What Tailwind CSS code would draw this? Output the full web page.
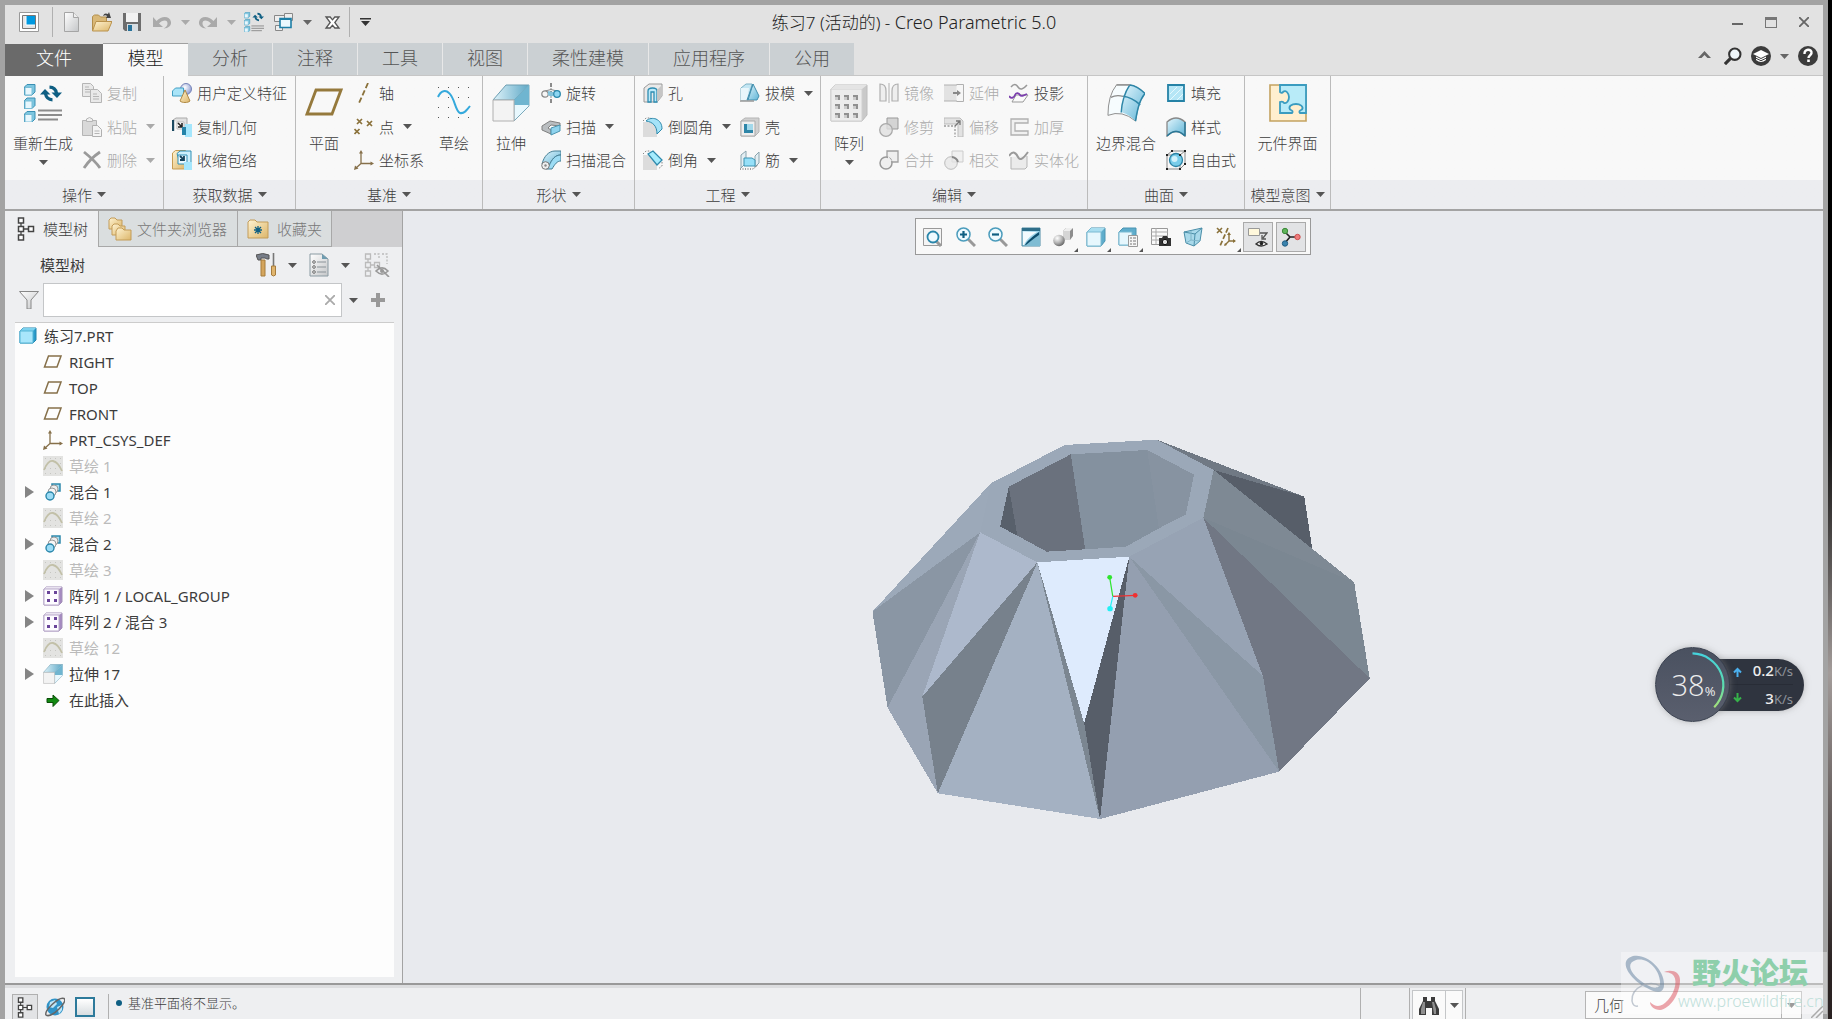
<!DOCTYPE html>
<html lang="zh-CN">
<head>
  <meta charset="UTF-8" />
  <title>练习7 (活动的) - Creo Parametric 5.0</title>
  <meta name="viewport" content="width=device-width, initial-scale=1.0">
  <script src="https://cdn.jsdelivr.net/npm/@tailwindcss/browser@4"></script>
</head>
<body class="h-screen overflow-hidden pr-1 bg-linear-to-b from-black from-35% via-[#a39c9a] via-66% to-[#2a2222] to-95% font-['Noto_Sans','Noto_Sans_CJK_SC',sans-serif] font-light text-[15px] leading-5 text-[#3c3c3c]">

  <!-- icon sprite -->
  <svg class="absolute size-0" xmlns="http://www.w3.org/2000/svg">
    <defs>
      <linearGradient id="gBlue" x1="0" y1="0" x2="1" y2="1"><stop offset="0" stop-color="#e3f6fd"/><stop offset="1" stop-color="#5fb4d6"/></linearGradient>
      <linearGradient id="gTop" x1="0" y1="0" x2="1" y2="0"><stop offset="0" stop-color="#dff3fa"/><stop offset="1" stop-color="#5ea8c6"/></linearGradient>
      <linearGradient id="gGray" x1="0" y1="0" x2="1" y2="1"><stop offset="0" stop-color="#ffffff"/><stop offset="1" stop-color="#c4c6c8"/></linearGradient>
      <linearGradient id="gGold" x1="0" y1="0" x2="1" y2="1"><stop offset="0" stop-color="#fff3d2"/><stop offset="1" stop-color="#dcb66a"/></linearGradient>
      <radialGradient id="gBall" cx=".35" cy=".3" r=".8"><stop offset="0" stop-color="#ffffff"/><stop offset=".5" stop-color="#b5b5b5"/><stop offset="1" stop-color="#555555"/></radialGradient>
      <radialGradient id="gSphere" cx=".4" cy=".35" r=".7"><stop offset="0" stop-color="#ffffff"/><stop offset="1" stop-color="#8796cf"/></radialGradient>
      <linearGradient id="gRing" x1="0" y1="0" x2="0" y2="1"><stop offset="0" stop-color="#45d3dc"/><stop offset=".6" stop-color="#5bdcae"/><stop offset="1" stop-color="#a5e07a"/></linearGradient>
    </defs>
    <symbol id="caret" viewBox="0 0 9 5"><path d="M0 0h9L4.500 5z" fill="currentColor"/></symbol>
    <symbol id="app" viewBox="0 0 20 20"><path d="M.5.5h19v19H.5z" fill="#fff" stroke="#999"/><path d="M3.500 3.500h13v13h-13z" fill="#e6e6e6" stroke="#777"/><path d="M7 4h9v9H7z" fill="#0099e0"/><path d="M7 4v9h9" fill="none" stroke="#fff"/></symbol>
    <symbol id="new" viewBox="0 0 20 20"><path d="M2.500.5h9l5 5v14h-14z" fill="url(#gGray)" stroke="#a5a5a5"/><path d="M11.500.5v5h5" fill="#eee" stroke="#a5a5a5"/></symbol>
    <symbol id="open" viewBox="0 0 20 20"><path d="M.5 18.500v-14l2-1.500h4l2 2h6v5" fill="#d9b877" stroke="#b28e4c"/><path d="M4 9.500h16l-4 9.500H.5z" fill="url(#gGold)" stroke="#b9924d"/><path d="M11 4c1-3 3-3 5-2l1-2 2 6h-5l1-2c-1-1-2-1-4 0z" fill="#444"/></symbol>
    <symbol id="save" viewBox="0 0 20 20"><path d="M1 1h18v18H3l-2-2z" fill="#6d6d6d"/><path d="M4 1h12v9H4z" fill="#f2f2f2"/><path d="M5 12h11v7H5z" fill="#d6dde2"/><path d="M6 13h4v6H6z" fill="#267199"/></symbol>
    <symbol id="undo" viewBox="0 0 20 20"><path d="M1 5v10h10l-4-3.500C10 8 16 7 15.500 12c-.3 2-2 3.500-4 4.500 5 0 8-3 7.500-6.500C18 4 10 3 4.500 9z" fill="#aaa"/></symbol>
    <symbol id="redo" viewBox="0 0 20 20"><path d="M19 5v10H9l4-3.500C10 8 4 7 4.500 12c.3 2 2 3.500 4 4.500-5 0-8-3-7.500-6.500C2 4 10 3 15.500 9z" fill="#aaa"/></symbol>
    <symbol id="regen" viewBox="0 0 38 38"><g stroke="#3a8fb3" stroke-width="1"><path d="M.5 3l2.500-2.500h8V8l-3 3H.5z" fill="#7cc6e0"/><path d="M1 3.500h7V11H1z" fill="#e8f7fd" stroke="#79bdd6"/><path d="M.5 16.500l2.500-2.500h8v7.500l-3 3H.5z" fill="#7cc6e0"/><path d="M1 17h7v7.500H1z" fill="#e8f7fd" stroke="#79bdd6"/><path d="M.5 30l2.500-2.500h8V35l-3 3H.5z" fill="#7cc6e0"/><path d="M1 30.500h7V38H1z" fill="#e8f7fd" stroke="#79bdd6"/></g><path d="M14 26.500h24M14 31h24M14 35.500h20" stroke="#8c8c8c" stroke-width="1.800"/><path d="M25.500 3.200q6 .2 7 6M28.500 15.800q-6-.2-7-6" fill="none" stroke="#0f5f83" stroke-width="3.200"/><path d="M27.500 8.500h10.500L33 14zM26.500 10.500H16L21 5z" fill="#0f5f83"/></symbol>
    <symbol id="wins" viewBox="0 0 20 20"><g fill="#eee" stroke="#888"><path d="M10.500 1.500h8v7h-8zM.5 3.500h10v6H.5zM1.500 13.500h7v5h-7z"/></g><path d="M6 6.500h11v9H6z" fill="#eaf8fe" stroke="#1d7ea6" stroke-width="1.600"/><path d="M6 7.500h11" stroke="#1d7ea6"/></symbol>
    <symbol id="xwin" viewBox="0 0 20 20"><path d="M4 5h4.200l2.300 2.800L12.800 5H17l-4.200 5.500L17 16h-4.200l-2.300-2.800L8.200 16H4l4.200-5.500z" fill="#fff" stroke="#555" stroke-width="1.300"/></symbol>
    <symbol id="bar" viewBox="0 0 11 8"><path d="M0 0h11v1.600H0zM1 3h9L5.500 8z" fill="#333"/></symbol>

    <symbol id="copy" viewBox="0 0 20 20"><g fill="#e9e9e9" stroke="#b5b5b5"><path d="M.5.500h8l3 3v10H.5z"/><path d="M8.500 6.500h7l4 4v9h-11z"/></g><path d="M3 4h4M3 6.500h5M3 9h5M11 11h4M11 13.500h6M11 16h6" stroke="#b5b5b5"/></symbol>
    <symbol id="paste" viewBox="0 0 20 20"><path d="M.5 3.500h14v15H.5z" fill="#d9d9d9" stroke="#b5b5b5"/><path d="M4.500 4.500V2l3-1.500L10.500 2v2.500z" fill="#eee" stroke="#b5b5b5"/><path d="M10.500 8.500h5l4 4v7h-9z" fill="#f4f4f4" stroke="#b0b0b0"/><path d="M12.500 14h5M12.500 16.500h5" stroke="#b5b5b5"/></symbol>
    <symbol id="del" viewBox="0 0 20 20"><path d="M2 2c5 4 12 10 16 16M18 2C12 6 6 12 2 18" stroke="#9a9a9a" stroke-width="2.800" fill="none"/></symbol>
    <symbol id="udf" viewBox="0 0 20 20"><circle cx="14" cy="6" r="5.500" fill="url(#gSphere)" stroke="#7684b8"/><path d="M.5 8l3-3h8v8h-11z" fill="#a9e4f8" stroke="#429fc4"/><path d="M13 7l5 11c-2 2-8 2-10 0z" fill="url(#gGold)" stroke="#b08a45"/></symbol>
    <symbol id="copygeo" viewBox="0 0 20 20"><path d="M1 3l3-2h11v11" fill="#e0e0e0" stroke="#aaa"/><path d="M1 3v11" stroke="#1c4961" stroke-width="2.400"/><path d="M5 5h7v7H5z" fill="#fff" stroke="#bbb"/><path d="M6 6l4 4m0-4v4H6" stroke="#222" stroke-width="1.600" fill="none"/><path d="M13 7h7v13h-7z" fill="#a5e6fc"/><path d="M10 10h4v8h-4z" fill="#2583a8"/></symbol>
    <symbol id="shrink" viewBox="0 0 20 20"><path d="M.5 3l3-2.500h10V19H.5z" fill="url(#gGold)" stroke="#c59b52"/><path d="M5 3.500L8 1h11v12H8z" fill="#cdeffb" stroke="#2f8fb5"/><path d="M6 5h9v9H6z" fill="#eaf9ff" stroke="#2f8fb5"/><path d="M8 6l4 4m0-4v4H8" stroke="#16435c" stroke-width="1.800" fill="none"/><path d="M12 12h8v8h-8z" fill="#a5e6fc"/></symbol>
    <symbol id="plane" viewBox="0 0 38 28"><path d="M11 2h25l-9 24H2z" fill="none" stroke="#95793c" stroke-width="2.800"/></symbol>
    <symbol id="plane-s" viewBox="0 0 20 20"><path d="M5.500 4H18l-4 11H1.500z" fill="none" stroke="#86704a" stroke-width="1.500"/></symbol>
    <symbol id="axis" viewBox="0 0 20 20"><path d="M14 0L5 20" stroke="#8a713a" stroke-width="1.800" stroke-dasharray="5.500 2.500"/></symbol>
    <symbol id="point" viewBox="0 0 20 20"><path d="M3 2l5 5m0-5L3 7M13 4l5 5m0-5l-5 5M.5 12l5 5m0-5l-5 5" stroke="#8a713a" stroke-width="1.700"/></symbol>
    <symbol id="csys" viewBox="0 0 20 20"><path d="M7 2v11.500h11M7 13.500L2 18" stroke="#86704a" stroke-width="1.300" fill="none"/><path d="M7 0l2 3.500H5zM20 13.500L16.500 11.500v4zM0 20l1-4.500 3.500 3z" fill="#86704a"/></symbol>
    <symbol id="sketch" viewBox="0 0 34 34"><path d="M11 1h1v1h-1zM21 1h1v1h-1zM31 1h1v1h-1zM1 1h1v1H1zM11 11h1v1h-1zM21 11h1v1h-1zM31 11h1v1h-1zM1 21h1v1H1zM11 21h1v1h-1zM31 21h1v1h-1zM1 31h1v1H1zM11 31h1v1h-1zM21 31h1v1h-1zM31 31h1v1h-1z" fill="#555"/><path d="M1 11C4 4 9 4 12 7c6 5 6 18 11 20 4 1 7-3 10-7" stroke="#35a9dc" stroke-width="2" fill="none"/></symbol>
    <symbol id="extrude" viewBox="0 0 38 38"><path d="M1 16L14 1h23L22 16z" fill="url(#gTop)" stroke="#6c9eb2"/><path d="M37 1v21L22 37V16z" fill="#e8f8fe" stroke="#7aa9bb"/><path d="M37 1v20H22v-5z" fill="#6fb5d0"/><path d="M1 16h21v21H1z" fill="#f3f3f3" stroke="#b0b0b0"/></symbol>
    <symbol id="revolve" viewBox="0 0 20 20"><path d="M10 0v20" stroke="#444" stroke-width="1.200" stroke-dasharray="4 1.500 1 1.500"/><path d="M4 8q6-3 12 0" fill="none" stroke="#888"/><circle cx="4" cy="11" r="3.200" fill="#f5f5f5" stroke="#888" stroke-width="1.200"/><circle cx="16" cy="11" r="3.300" fill="#8dd6f2" stroke="#2887ab" stroke-width="1.300"/><path d="M7 12q2 2 5 1V9L7 8z" fill="#83c2da"/></symbol>
    <symbol id="sweep" viewBox="0 0 20 20"><path d="M1 9l8-5 10 2v3l-9-1-3 3 3 2v4l-9-4z" fill="#b9bdc0" stroke="#808080"/><path d="M10 11l9-3v6l-9 4z" fill="#8ed3ee" stroke="#4a93ae"/></symbol>
    <symbol id="sblend" viewBox="0 0 20 20"><path d="M1 14C3 6 8 1 14 1h6v4c-6 0-9 4-12 11z" fill="url(#gBlue)" stroke="#467f95"/><path d="M20 5v6c-4 0-6 3-9 8H5l3-3c3-7 6-11 12-11z" fill="#9cdcf4" stroke="#467f95"/><circle cx="4.500" cy="15.500" r="3.800" fill="#eee" stroke="#777"/><circle cx="4.500" cy="15.500" r="1.200" fill="#888"/></symbol>
    <symbol id="hole" viewBox="0 0 20 20"><path d="M1 5l5-4h13v12l-5 6H1z" fill="#e9e9e9" stroke="#999"/><path d="M5 19V8c0-4 9-4 9 0v11h-3V9H8v10z" fill="#bdeafa" stroke="#2e8db2" stroke-width="1.300"/><path d="M14 7l5-5v11l-5 6z" fill="#c5c5c5"/></symbol>
    <symbol id="round" viewBox="0 0 20 20"><path d="M0 5h5c5 0 9 5 9 10v5H0z" fill="#dcdcdc"/><path d="M3 4C6 1 10 1 13 2c4 2 6 5 6 10l-5 5C14 9 10 5 3 4z" fill="#a5e3f8" stroke="#2f8aad"/><path d="M0 4l3-3h5" stroke="#888" stroke-dasharray="1.500 1.500" fill="none"/></symbol>
    <symbol id="chamfer" viewBox="0 0 20 20"><path d="M0 5h6l8 9v6H0z" fill="#dcdcdc"/><path d="M5 4l5-3 9 9-5 5z" fill="#a5ecfd" stroke="#2f8aad" stroke-width="1.300"/><path d="M0 4l3-3h5M19 12v4l-4 3" stroke="#888" stroke-dasharray="1.500 1.500" fill="none"/></symbol>
    <symbol id="draft" viewBox="0 0 20 20"><path d="M1 5l5-4h6l-4 16H1z" fill="#c3e6f3" stroke="#7db2c6"/><path d="M1 5h8L7 17H1z" fill="#e9f6fb"/><path d="M7 17L13 1l6 12-2 4z" fill="url(#gBlue)" stroke="#428fae"/><path d="M13 1L8 17" stroke="#428fae"/><path d="M0 18h14" stroke="#999" stroke-width="1.500"/></symbol>
    <symbol id="shell" viewBox="0 0 20 20"><path d="M1 4l4-3h14v14l-4 4H1z" fill="#d0d0d0" stroke="#b5b5b5"/><path d="M1 4h14v15H1z" fill="#eee" stroke="#aaa"/><path d="M4 7h9v9H4z" fill="#2e86a8"/><path d="M7 7h6v6H7z" fill="#a2d8ea"/></symbol>
    <symbol id="rib" viewBox="0 0 20 20"><path d="M1 5l5-4v12l-5 5zM15 6l4-4v11l-4 4z" fill="#e4eef2" stroke="#8aa4ae"/><path d="M4 8h8l3 2v6H4z" fill="#96e0f8" stroke="#3d93b2"/><path d="M0 19h13l5-4" fill="none" stroke="#444" stroke-dasharray="1 1.500"/></symbol>
    <symbol id="pattern" viewBox="0 0 38 38"><path d="M1 5l4-4h32v30l-5 6H1z" fill="#c9c9c9" stroke="#bcbcbc"/><path d="M1 5h31v32H1z" fill="#ececec" stroke="#d0d0d0"/><path d="M1 5l4-4h32l-5 4z" fill="#e4e4e4"/><path d="M5 11h5v5H5zM14 11h5v5h-5zM23 11h5v5h-5zM5 20h5v5H5zM14 20h5v5h-5zM23 20h5v5h-5zM5 29h5v5H5zM14 29h5v5h-5zM23 29h5v5h-5z" fill="#909090"/><path d="M5 13h3v3H5zM14 13h3v3h-3zM23 13h3v3h-3zM5 22h3v3H5zM14 22h3v3h-3zM23 22h3v3h-3zM5 31h3v3H5zM14 31h3v3h-3zM23 31h3v3h-3z" fill="#ccc"/></symbol>
    <symbol id="mirror" viewBox="0 0 20 20"><g fill="#eee" stroke="#b0b0b0" stroke-width="1.200"><path d="M1 1q6 0 6 7v10H1zM19 1q-6 0-6 7v10h6z"/></g><path d="M10 0v20" stroke="#b0b0b0"/></symbol>
    <symbol id="trim" viewBox="0 0 20 20"><path d="M8 1h11v11H8z" fill="#d4d4d4" stroke="#999"/><circle cx="7" cy="13" r="6.300" fill="#e0e0e0" fill-opacity=".8" stroke="#aaa" stroke-width="1.300"/></symbol>
    <symbol id="merge" viewBox="0 0 20 20"><path d="M8 1h11v11H8z" fill="#efefef" stroke="#a0a0a0" stroke-width="1.300"/><circle cx="7" cy="13" r="6" fill="#efefef" stroke="#999" stroke-width="1.500"/><path d="M9 6l4 5-4 1z" fill="#efefef"/></symbol>
    <symbol id="intersect" viewBox="0 0 20 20"><path d="M8 1h11v11H8z" fill="#f0f0f0" stroke="#ccc"/><circle cx="7" cy="13" r="6.300" fill="#e5e5e5" fill-opacity=".7" stroke="#bbb"/><path d="M8 7q5 1 6 5" stroke="#888" stroke-width="1.800" fill="none"/></symbol>
    <symbol id="extend" viewBox="0 0 20 20"><path d="M0 2h13v16H0z" fill="#e2e2e2"/><path d="M12.500 1.500h7v17h-7M0 2h13M0 18h13" fill="#f6f6f6" stroke="#b0b0b0"/><path d="M9 9h4V7l4 3-4 3v-2H9z" fill="#888"/></symbol>
    <symbol id="offset" viewBox="0 0 20 20"><path d="M0 1h16l3 3v16h-5V7H0z" fill="#e2e2e2" stroke="#bbb"/><path d="M0 9h11v11" stroke="#999" stroke-width="1.300" stroke-dasharray="2 1.500" fill="none"/><path d="M11 9l5-5m-4 0h4v4" stroke="#777" stroke-width="1.300" fill="none"/></symbol>
    <symbol id="project" viewBox="0 0 20 20"><path d="M2 4q4-5 7 0t9-2" stroke="#999" stroke-width="1.500" fill="none"/><path d="M3 19l4-7h12l-5 7z" fill="#fafafa" stroke="#999"/><path d="M0 13c2 3 5 2 6-1s4-2 5 0 5 0 7-1" stroke="#7c3fae" stroke-width="1.800" fill="none"/></symbol>
    <symbol id="thicken" viewBox="0 0 20 20"><path d="M2 2h17v4H6v8h13v4H2z" fill="#f0f0f0" stroke="#b0b0b0" stroke-width="1.300"/></symbol>
    <symbol id="solidify" viewBox="0 0 20 20"><path d="M2 7v12h14l2-2V6" fill="#ebebeb" stroke="#b5b5b5"/><path d="M0 6C4 0 7 3 9 7s5 2 10-5" stroke="#9a9a9a" stroke-width="2" fill="none"/></symbol>
    <symbol id="boundary" viewBox="0 0 40 40"><path d="M10 1h14q8 1 16 9c-6 7-8 17-10 29Q16 27 1 33 1 12 10 1z" fill="#f6fcfe" stroke="#8a8a8a"/><path d="M24 1q8 1 16 9c-6 7-8 17-10 29q-7-7-14-9 0-17 8-29z" fill="url(#gBlue)"/><path d="M24 1q-8 12-9 29M17 13q9 1 18 9M24 1q8 1 16 9c-6 7-8 17-10 29" fill="none" stroke="#2d86a8" stroke-width="1.600"/><path d="M4 14q6-3 13-1M10 1h14" stroke="#8a8a8a" stroke-width="1.400" fill="none"/></symbol>
    <symbol id="fill" viewBox="0 0 20 20"><path d="M2 2h16v16H2z" fill="#b5e6f6" stroke="#2582a6" stroke-width="1.800"/><path d="M4 11l7-7M4 17L17 4M11 17l6-6" stroke="#e6f8fd"/></symbol>
    <symbol id="style" viewBox="0 0 20 20"><path d="M1 5Q10-3 19 5v14Q10 10 1 19z" fill="url(#gBlue)" stroke="#888" stroke-width="1.300"/><path d="M19 5v14M1 19Q10 10 19 19" stroke="#28799a" stroke-width="1.500" fill="none"/></symbol>
    <symbol id="free" viewBox="0 0 20 20"><path d="M1 5l5-4h13v13l-5 5H1zM1 5h13v14M14 5l5-4" fill="none" stroke="#888"/><circle cx="10" cy="10" r="6.500" fill="#79cdea" stroke="#2a82a4" stroke-width="1.300"/><circle cx="8.500" cy="9" r="3" fill="#d0f1fb"/><path d="M0 4h2v2H0zM5 0h2v2H5zM18 0h2v2h-2zM13 4h2v2h-2zM0 18h2v2H0zM13 18h2v2h-2zM18 13h2v2h-2z" fill="#222"/></symbol>
    <symbol id="puzzle" viewBox="0 0 38 38"><path d="M1 1h36v36H1z" fill="#ffefcf" stroke="#c4a260" stroke-width="1.600"/><path d="M11 1h26v28h-6q-2-2 2-3.500c2-3-2-5.500-6-5.500s-8 2-6 5.500Q25 27 23 29H11V18q3-1 4 1c3 1 5-3 5-6s-3-8-6-5c-1 2-3 0-3 0z" fill="#b8ebf8" stroke="#3a9cc0" stroke-width="1.800"/></symbol>

    <symbol id="z-fit" viewBox="0 0 20 20"><path d="M.5 1.500h18v17H.5z" fill="#f4f4f4" stroke="#999"/><path d="M13 14l5 5" stroke="#999" stroke-width="3"/><circle cx="10" cy="10" r="5.500" fill="#eefaff" stroke="#2a86aa" stroke-width="1.800"/></symbol>
    <symbol id="z-in" viewBox="0 0 20 20"><path d="M12 12l7 7" stroke="#999" stroke-width="3"/><circle cx="7.500" cy="7.500" r="6.500" fill="#eefaff" stroke="#4b9cbc" stroke-width="1.500"/><path d="M4 7.500h7M7.500 4v7" stroke="#0f5f83" stroke-width="2.200"/></symbol>
    <symbol id="z-out" viewBox="0 0 20 20"><path d="M12 12l7 7" stroke="#999" stroke-width="3"/><circle cx="7.500" cy="7.500" r="6.500" fill="#eefaff" stroke="#4b9cbc" stroke-width="1.500"/><path d="M4 7.500h7" stroke="#0f5f83" stroke-width="2.200"/></symbol>
    <symbol id="repaint" viewBox="0 0 20 20"><path d="M1 1h18v18H1z" fill="url(#gBlue)" stroke="#4d8aa3"/><path d="M1 1h18v3H1z" fill="#2e6e89"/><path d="M5 19c1-5 6-9 14-11v11z" fill="#7fbcd3"/><path d="M4 18c2-4 7-8 14-13v3c-5 3-9 7-13 10z" fill="#0e4f6e"/><path d="M2 5h14C9 9 5 13 3 18H2z" fill="#f3fbfe"/></symbol>
    <symbol id="shade" viewBox="0 0 20 20"><path d="M10 4l3-3h7v8l-3 4h-7z" fill="#8d8d8d"/><path d="M10 4h7v9h-7z" fill="#d5d5d5"/><path d="M10 4l3-3h7l-3 3z" fill="#eee"/><circle cx="6" cy="13.500" r="5.800" fill="url(#gBall)"/></symbol>
    <symbol id="cube" viewBox="0 0 20 20"><path d="M1 5l4-4h14v13l-4 5H1z" fill="#5fadcc" stroke="#4a94b2"/><path d="M1 5l4-4h14l-4 4z" fill="#a9def0"/><path d="M1 5h14v14H1z" fill="#e6f7fd" stroke="#7bbad2"/></symbol>
    <symbol id="views" viewBox="0 0 20 20"><path d="M1 5l4-4h13v12l-4 5H1z" fill="#5fadcc" stroke="#4a94b2"/><path d="M1 5h13v13H1z" fill="#e6f7fd" stroke="#7bbad2"/><path d="M10.500 8.500h9v11h-9z" fill="#f6f6f6" stroke="#999"/><path d="M12 11h2m1 0h3m-6 3h2m1 0h3m-6 3h2m1 0h3" stroke="#777"/></symbol>
    <symbol id="cam" viewBox="0 0 20 20"><path d="M.5 1.500h16v16H.5z" fill="#fafafa" stroke="#999"/><path d="M0 5h17M0 9h17M0 13h8M5 1v16" stroke="#aaa"/><path d="M8 11h3l1-2h4l1 2h3v8H8z" fill="#333"/><circle cx="14" cy="15" r="2.700" fill="#ddd" stroke="#111"/></symbol>
    <symbol id="persp" viewBox="0 0 20 20"><path d="M1 5l18-4-2 13-6 5-8-3z" fill="#a9d9ea" stroke="#4a8ea8"/><path d="M1 5l11 2 7-6M12 7l-1 12" fill="none" stroke="#4a8ea8"/><path d="M8 4v9l-5 3m5-3l9 1" fill="none" stroke="#7fb5c8"/></symbol>
    <symbol id="datum" viewBox="0 0 20 20"><path d="M1 1l5 5m0-5L1 6" stroke="#8a713a" stroke-width="1.600"/><path d="M12 1L4 19" stroke="#8a713a" stroke-width="1.700" stroke-dasharray="5 2"/><path d="M13 7v7h6M13 14l-4 4" stroke="#8a713a" stroke-width="1.400" fill="none"/><path d="M13 5l2 3h-4zM20 14l-3-2v4zM8 19l1-3 2 2z" fill="#8a713a"/></symbol>
    <symbol id="annot" viewBox="0 0 20 20"><path d="M.5 1.500h11v7H.5z" fill="#fff8dc" stroke="#999"/><path d="M12 6h7l-4 5m-1-3v4h4" fill="none" stroke="#555" stroke-width="1.300"/><path d="M8 17q5-5 11 0-6 4-11 0z" fill="#fff" stroke="#333" stroke-width="1.400"/><circle cx="13.500" cy="16.500" r="1.800" fill="#222"/></symbol>
    <symbol id="spin" viewBox="0 0 20 20"><path d="M3 4l6 6 8 0M9 10l-6 7" stroke="#222" stroke-width="1.600" fill="none"/><circle cx="4" cy="4" r="2.700" fill="#5fb35a" stroke="#3c8a3a"/><circle cx="16.500" cy="10" r="2.700" fill="#ee7c7c" stroke="#cc4e4e"/><circle cx="4" cy="16.500" r="2.700" fill="#3a83ad" stroke="#225f85"/></symbol>

    <symbol id="tree" viewBox="0 0 18 24"><path d="M4 6v3.500M4 14.500V18M6.500 12H12" stroke="#444" stroke-width="1.300"/><g fill="#fff" stroke="#444" stroke-width="1.500"><path d="M1.500 1h5v5h-5zM1.500 9.500h5v5h-5zM1.500 18h5v5h-5zM11.500 9.500h5v5h-5z"/></g></symbol>
    <symbol id="folders" viewBox="0 0 24 24"><g fill="url(#gGold)" stroke="#c39c58"><path d="M1 3l2-2h4l2 2h5v9H1z"/><path d="M4 9l2-2h4l2 2h5v9H4z"/><path d="M8 14l2-3h4l2 2h7v10H8z"/></g></symbol>
    <symbol id="fav" viewBox="0 0 22 20"><path d="M1 3l2-2h5l2 2h11v16H1z" fill="url(#gGold)" stroke="#c39c58"/><path d="M11 7v8M7 11h8M8 8l6 6M14 8l-6 6" stroke="#0f5f83" stroke-width="1.300"/></symbol>
    <symbol id="tools" viewBox="0 0 20 24"><path d="M0 2q7-3 13 0v4h-2L9 5H5v2H2z" fill="#777d88" stroke="#555"/><path d="M5 7h4v16H5z" fill="#d4a55d" stroke="#a67c3d"/><path d="M17.500 0v14" stroke="#777" stroke-width="1.600"/><path d="M15.500 13h4v9q-2 2-4 0z" fill="#e0b56e" stroke="#a67c3d"/></symbol>
    <symbol id="list" viewBox="0 0 20 24"><path d="M1 1h12l6 5v17H1z" fill="url(#gGray)" stroke="#8a9aa2"/><path d="M13 1v5h6z" fill="#6f9cb0"/><path d="M8 9h9M8 14h9M8 19h9" stroke="#8a9298"/><g fill="#fff" stroke="#666"><circle cx="5" cy="9" r="1.300"/><circle cx="5" cy="14" r="1.300"/><circle cx="5" cy="19" r="1.300"/></g></symbol>
    <symbol id="hidetree" viewBox="0 0 26 24"><g fill="none" stroke="#bbb" stroke-width="1.300"><path d="M1.500 1h5v5h-5zM1.500 9.500h5v5h-5zM1.500 18h5v5h-5zM10.500 9.500h5v5h-5zM4 6v3.500M4 14.500V18M6.500 12h4"/><path d="M10 1h5v5M18 1h5v10" stroke-dasharray="2 1.500"/></g><path d="M12 18q6-6 12 0-6 6-12 0zM13 12l12 12" stroke="#999" stroke-width="1.700" fill="none"/><circle cx="18" cy="18" r="2" fill="#999"/></symbol>
    <symbol id="funnel" viewBox="0 0 20 18"><path d="M.5.500h19L12 9v9H8V9z" fill="url(#gGray)" stroke="#888"/></symbol>
    <symbol id="part" viewBox="0 0 20 20"><path d="M1 5l3-3h13v12l-3 3H1z" fill="#2b9ccb" stroke="#2385ae"/><path d="M1 5l3-3h13l-3 3z" fill="#7dd2ee"/><path d="M1 5h13v12H1z" fill="#a8e6fb" stroke="#55b5d6"/></symbol>
    <symbol id="sk-off" viewBox="0 0 20 20"><path d="M0 0h20v20H0z" fill="#e3e3e1"/><path d="M2 2h1v1H2zM7 2h1v1H7zM12 2h1v1h-1zM17 2h1v1h-1zM2 12h1v1H2zM7 12h1v1H7zM12 12h1v1h-1zM17 7h1v1h-1zM2 17h1v1H2zM7 17h1v1H7zM12 17h1v1h-1zM17 17h1v1h-1z" fill="#c6c6c2"/><path d="M1 14Q5 4 10 5t9 10" stroke="#c2c0a8" stroke-width="1.800" fill="none"/></symbol>
    <symbol id="blend" viewBox="0 0 20 20"><path d="M9 2h8v7H9z" fill="#a7def1" stroke="#2f89ac" stroke-width="1.500"/><circle cx="11" cy="7" r="4" fill="#eee" stroke="#999"/><circle cx="9" cy="10" r="4" fill="#f6f6f6" stroke="#999"/><circle cx="7" cy="14" r="4" fill="#9bdcf6" stroke="#2a86aa" stroke-width="1.400"/></symbol>
    <symbol id="patt-s" viewBox="0 0 20 20"><path d="M1 3l2-2h16v15l-3 3H1z" fill="#a58ac0" stroke="#a391b8"/><path d="M1 3l2-2h16l-3 2z" fill="#e9e3f0"/><path d="M1 3h15v16H1z" fill="#fdfcff" stroke="#b9aacb"/><path d="M4 5h3v3H4zM11 5h3v3h-3zM4 13h3v3H4zM11 13h3v3h-3z" fill="#6a459a"/></symbol>
    <symbol id="insert" viewBox="0 0 20 20"><path d="M4 8.500h6V5l6 5.500-6 6v-4H4z" fill="#128a12" stroke="#0b4d08"/></symbol>
    <symbol id="tri" viewBox="0 0 9 12"><path d="M0 0l9 6-9 6z" fill="#858585"/></symbol>
    <symbol id="globe" viewBox="0 0 20 20"><circle cx="10" cy="10" r="8.500" fill="#2f93c8"/><path d="M5 5l5-2 2 4-4 4-4-1zM12 10l5-2v5l-3 4z" fill="#bfe6f7"/><path d="M1 18C-1 14 14-1 19 1.500S6 22 1 18z" fill="none" stroke="#666" stroke-width="1.500"/></symbol>
    <symbol id="binoc" viewBox="0 0 22 20"><path d="M5 1h4v4h4V1h4v4l4 8v6h-7v-7H8v7H1v-6l4-8z" fill="#3c3c3c"/><path d="M5 6h2v12H3v-5zM14 6h2l2 7v5h-2z" fill="#8f8f8f"/></symbol>
    <symbol id="search" viewBox="0 0 20 20"><path d="M7 13l-6 6" stroke="#333" stroke-width="3.500"/><circle cx="12" cy="8" r="6.300" fill="#eef6fa" stroke="#333" stroke-width="2.300"/></symbol>
    <symbol id="cap" viewBox="0 0 20 20"><circle cx="10" cy="10" r="10" fill="#3c3c3c"/><path d="M10 4l8 4-8 4-8-4zM5 10.500l5 2.500 5-2.500V14q-5 4-10 0z" fill="#fff"/><path d="M5 12.300l5 2.400 5-2.400" stroke="#3c3c3c" fill="none"/></symbol>
    <symbol id="help" viewBox="0 0 20 20"><circle cx="10" cy="10" r="10" fill="#3c3c3c"/><path d="M6.500 8C6 2.500 14 2.500 13.500 7c-.3 2.300-3 2.500-3 5" stroke="#fff" stroke-width="2.400" fill="none"/><path d="M9.200 13.500h2.600v2.500H9.200z" fill="#fff"/></symbol>
  </svg>

  <div class="flex h-full flex-col overflow-hidden border-[5px] border-b-0 border-[#a3a3a3] bg-[#e2e2e2]">

    <!-- title bar -->
    <header class="grid h-[38px] shrink-0 grid-cols-[1fr_auto_1fr] pt-[2px]">
      <div class="flex h-[30px] items-center text-[#666]">
        <button aria-label="Creo" class="flex w-[47px] justify-center"><svg class="size-5"><use href="#app"/></svg></button>
        <span class="mr-1 h-[30px] w-px bg-[#b0b0b0]"></span>
        <button aria-label="新建" class="flex w-[30px] justify-center"><svg class="size-5"><use href="#new"/></svg></button>
        <button aria-label="打开" class="flex w-[30px] justify-center"><svg class="size-5"><use href="#open"/></svg></button>
        <button aria-label="保存" class="flex w-[30px] justify-center"><svg class="size-5"><use href="#save"/></svg></button>
        <button aria-label="撤销" class="flex w-[30px] justify-center"><svg class="size-5"><use href="#undo"/></svg></button>
        <button aria-label="撤销列表" class="flex w-4 justify-center text-[#aaa]"><svg class="h-[5px] w-[9px]"><use href="#caret"/></svg></button>
        <button aria-label="重做" class="flex w-[30px] justify-center"><svg class="size-5"><use href="#redo"/></svg></button>
        <button aria-label="重做列表" class="flex w-4 justify-center text-[#aaa]"><svg class="h-[5px] w-[9px]"><use href="#caret"/></svg></button>
        <button aria-label="重新生成模型" class="flex w-[30px] justify-center"><svg class="size-5"><use href="#regen"/></svg></button>
        <button aria-label="窗口" class="flex w-[30px] justify-center"><svg class="size-5"><use href="#wins"/></svg></button>
        <button aria-label="窗口列表" class="flex w-4 justify-center"><svg class="h-[5px] w-[9px]"><use href="#caret"/></svg></button>
        <button aria-label="关闭窗口" class="flex w-[34px] justify-center"><svg class="size-5"><use href="#xwin"/></svg></button>
        <span class="mr-1 h-[30px] w-px bg-[#b0b0b0]"></span>
        <button aria-label="自定义" class="flex w-[22px] justify-center"><svg class="h-2 w-[11px]"><use href="#bar"/></svg></button>
      </div>
      <h1 class="pt-[3px] text-[17px] leading-6 font-light text-[#222]">练习7 (活动的) - <span class="text-lg leading-6">Creo Parametric 5.0</span></h1>
      <div class="flex h-[30px] items-center justify-end pr-[3px]">
        <button aria-label="最小化" class="flex w-[33px] justify-center pt-1"><span class="h-[2px] w-[11px] bg-[#666]"></span></button>
        <button aria-label="最大化" class="flex w-[33px] justify-center"><span class="h-[11px] w-3 border border-t-[3px] border-[#777]"></span></button>
        <button aria-label="关闭" class="flex w-[33px] justify-center"><svg class="size-[10px]" viewBox="0 0 10 10"><path d="M0 0l10 10M10 0L0 10" stroke="#666" stroke-width="1.800"/></svg></button>
      </div>
    </header>

    <!-- ribbon tabs -->
    <nav class="flex h-[33px] shrink-0 items-start justify-between border-b border-[#c6c6c6]">
      <div class="flex h-[33px] text-lg leading-7 text-[#555]">
        <button class="mt-px h-8 w-[98px] bg-[#6a6a6a] pb-1 text-white">文件</button>
        <button class="h-[33px] w-[85px] border-t border-[#a0a0a0] bg-[#f8f8f8] pb-1 text-[#222]">模型</button>
        <button class="h-8 w-[85px] border-r border-[#e8e8e8] bg-[#cbd0d3] pb-[2px]">分析</button>
        <button class="h-8 w-[85px] border-r border-[#e8e8e8] bg-[#cbd0d3] pb-[2px]">注释</button>
        <button class="h-8 w-[85px] border-r border-[#e8e8e8] bg-[#cbd0d3] pb-[2px]">工具</button>
        <button class="h-8 w-[85px] border-r border-[#e8e8e8] bg-[#cbd0d3] pb-[2px]">视图</button>
        <button class="h-8 w-[121px] border-r border-[#e8e8e8] bg-[#cbd0d3] pb-[2px]">柔性建模</button>
        <button class="h-8 w-[121px] border-r border-[#e8e8e8] bg-[#cbd0d3] pb-[2px]">应用程序</button>
        <button class="h-8 w-[84px] bg-[#cbd0d3] pb-[2px]">公用</button>
      </div>
      <div class="flex h-[26px] items-center pr-px text-[#666]">
        <button aria-label="最小化功能区" class="flex w-7 justify-center pb-1"><svg class="h-[7px] w-[13px]" viewBox="0 0 13 7"><path d="M0 7l6.500-7L13 7H9.500L6.500 4l-3 3z" fill="currentColor"/></svg></button>
        <button aria-label="搜索" class="flex w-[30px] justify-center"><svg class="size-[18px]"><use href="#search"/></svg></button>
        <button aria-label="学习" class="flex w-[26px] justify-center"><svg class="size-5"><use href="#cap"/></svg></button>
        <button aria-label="学习列表" class="flex w-5 justify-center"><svg class="h-[5px] w-[9px]"><use href="#caret"/></svg></button>
        <button aria-label="帮助" class="flex w-7 justify-center"><svg class="size-5"><use href="#help"/></svg></button>
      </div>
    </nav>

    <!-- ribbon -->
    <div class="flex h-[135px] shrink-0 border-b-2 border-[#a3a3a3] bg-linear-to-b from-[#f8f8f8] from-78% to-[#ecedf0] to-78%">
      <section class="flex w-[159px] flex-col border-r border-[#bbb]">
        <div class="flex h-[104px] pl-2">
          <button class="flex w-[60px] flex-col items-center pt-2"><svg class="size-[38px]"><use href="#regen"/></svg><span class="mt-[11px]">重新生成</span><svg class="mt-[7px] h-[5px] w-[9px] text-[#555]"><use href="#caret"/></svg></button>
          <div class="ml-[9px] flex flex-col text-[#aaa]">
            <button class="flex h-[34px] items-center gap-[5px]"><svg class="size-5"><use href="#copy"/></svg>复制</button>
            <button class="flex h-[33px] items-center gap-[5px]"><svg class="size-5"><use href="#paste"/></svg>粘贴<svg class="ml-1 h-[5px] w-[9px]"><use href="#caret"/></svg></button>
            <button class="flex h-[34px] items-center gap-[5px]"><svg class="size-5"><use href="#del"/></svg>删除<svg class="ml-1 h-[5px] w-[9px]"><use href="#caret"/></svg></button>
          </div>
        </div>
        <button class="flex h-[29px] items-center justify-center gap-[5px]">操作<svg class="h-[5px] w-[9px] text-[#555]"><use href="#caret"/></svg></button>
      </section>

      <section class="flex w-[132px] flex-col border-r border-[#bbb]">
        <div class="flex h-[104px] flex-col pl-2">
          <button class="flex h-[34px] items-center gap-[5px]"><svg class="size-5"><use href="#udf"/></svg>用户定义特征</button>
          <button class="flex h-[33px] items-center gap-[5px]"><svg class="size-5"><use href="#copygeo"/></svg>复制几何</button>
          <button class="flex h-[34px] items-center gap-[5px]"><svg class="size-5"><use href="#shrink"/></svg>收缩包络</button>
        </div>
        <button class="flex h-[29px] items-center justify-center gap-[5px]">获取数据<svg class="h-[5px] w-[9px] text-[#555]"><use href="#caret"/></svg></button>
      </section>

      <section class="flex w-[187px] flex-col border-r border-[#bbb]">
        <div class="flex h-[104px] pl-2">
          <button class="flex w-10 flex-col items-center pt-3"><svg class="h-7 w-[38px]"><use href="#plane"/></svg><span class="mt-[17px]">平面</span></button>
          <div class="ml-[10px] flex flex-col">
            <button class="flex h-[34px] items-center gap-[5px]"><svg class="size-5"><use href="#axis"/></svg>轴</button>
            <button class="flex h-[33px] items-center gap-[5px]"><svg class="size-5"><use href="#point"/></svg>点<svg class="ml-1 h-[5px] w-[9px] text-[#555]"><use href="#caret"/></svg></button>
            <button class="flex h-[34px] items-center gap-[5px]"><svg class="size-5"><use href="#csys"/></svg>坐标系</button>
          </div>
          <button class="ml-[13px] flex w-[34px] flex-col items-center pt-[10px]"><svg class="size-[34px]"><use href="#sketch"/></svg><span class="mt-[13px]">草绘</span></button>
        </div>
        <button class="flex h-[29px] items-center justify-center gap-[5px]">基准<svg class="h-[5px] w-[9px] text-[#555]"><use href="#caret"/></svg></button>
      </section>

      <section class="flex w-[152px] flex-col border-r border-[#bbb]">
        <div class="flex h-[104px] pl-[9px]">
          <button class="flex w-[38px] flex-col items-center pt-2"><svg class="size-[38px]"><use href="#extrude"/></svg><span class="mt-[11px]">拉伸</span></button>
          <div class="ml-[11px] flex flex-col">
            <button class="flex h-[34px] items-center gap-[5px]"><svg class="size-5"><use href="#revolve"/></svg>旋转</button>
            <button class="flex h-[33px] items-center gap-[5px]"><svg class="size-5"><use href="#sweep"/></svg>扫描<svg class="ml-1 h-[5px] w-[9px] text-[#555]"><use href="#caret"/></svg></button>
            <button class="flex h-[34px] items-center gap-[5px]"><svg class="size-5"><use href="#sblend"/></svg>扫描混合</button>
          </div>
        </div>
        <button class="flex h-[29px] items-center justify-center gap-[5px]">形状<svg class="h-[5px] w-[9px] text-[#555]"><use href="#caret"/></svg></button>
      </section>

      <section class="flex w-[186px] flex-col border-r border-[#bbb]">
        <div class="flex h-[104px] gap-[9px] pl-2">
          <div class="flex flex-col">
            <button class="flex h-[34px] items-center gap-[5px]"><svg class="size-5"><use href="#hole"/></svg>孔</button>
            <button class="flex h-[33px] items-center gap-[5px]"><svg class="size-5"><use href="#round"/></svg>倒圆角<svg class="ml-1 h-[5px] w-[9px] text-[#555]"><use href="#caret"/></svg></button>
            <button class="flex h-[34px] items-center gap-[5px]"><svg class="size-5"><use href="#chamfer"/></svg>倒角<svg class="ml-1 h-[5px] w-[9px] text-[#555]"><use href="#caret"/></svg></button>
          </div>
          <div class="flex flex-col">
            <button class="flex h-[34px] items-center gap-[5px]"><svg class="size-5"><use href="#draft"/></svg>拔模<svg class="ml-1 h-[5px] w-[9px] text-[#555]"><use href="#caret"/></svg></button>
            <button class="flex h-[33px] items-center gap-[5px]"><svg class="size-5"><use href="#shell"/></svg>壳</button>
            <button class="flex h-[34px] items-center gap-[5px]"><svg class="size-5"><use href="#rib"/></svg>筋<svg class="ml-1 h-[5px] w-[9px] text-[#555]"><use href="#caret"/></svg></button>
          </div>
        </div>
        <button class="flex h-[29px] items-center justify-center gap-[5px]">工程<svg class="h-[5px] w-[9px] text-[#555]"><use href="#caret"/></svg></button>
      </section>

      <section class="flex w-[267px] flex-col border-r border-[#bbb]">
        <div class="flex h-[104px] pl-[9px]">
          <button class="flex w-[38px] flex-col items-center pt-2"><svg class="size-[38px]"><use href="#pattern"/></svg><span class="mt-[11px]">阵列</span><svg class="mt-[7px] h-[5px] w-[9px] text-[#555]"><use href="#caret"/></svg></button>
          <div class="ml-[11px] flex gap-[10px] text-[#aaa]">
            <div class="flex flex-col">
              <button class="flex h-[34px] items-center gap-[5px]"><svg class="size-5"><use href="#mirror"/></svg>镜像</button>
              <button class="flex h-[33px] items-center gap-[5px]"><svg class="size-5"><use href="#trim"/></svg>修剪</button>
              <button class="flex h-[34px] items-center gap-[5px]"><svg class="size-5"><use href="#merge"/></svg>合并</button>
            </div>
            <div class="flex flex-col">
              <button class="flex h-[34px] items-center gap-[5px]"><svg class="size-5"><use href="#extend"/></svg>延伸</button>
              <button class="flex h-[33px] items-center gap-[5px]"><svg class="size-5"><use href="#offset"/></svg>偏移</button>
              <button class="flex h-[34px] items-center gap-[5px]"><svg class="size-5"><use href="#intersect"/></svg>相交</button>
            </div>
            <div class="flex flex-col">
              <button class="flex h-[34px] items-center gap-[5px] text-[#3c3c3c]"><svg class="size-5"><use href="#project"/></svg>投影</button>
              <button class="flex h-[33px] items-center gap-[5px]"><svg class="size-5"><use href="#thicken"/></svg>加厚</button>
              <button class="flex h-[34px] items-center gap-[5px]"><svg class="size-5"><use href="#solidify"/></svg>实体化</button>
            </div>
          </div>
        </div>
        <button class="flex h-[29px] items-center justify-center gap-[5px]">编辑<svg class="h-[5px] w-[9px] text-[#555]"><use href="#caret"/></svg></button>
      </section>

      <section class="flex w-[157px] flex-col border-r border-[#bbb]">
        <div class="flex h-[104px] pl-2">
          <button class="flex w-[60px] flex-col items-center pt-2"><svg class="size-[38px]"><use href="#boundary"/></svg><span class="mt-[11px]">边界混合</span></button>
          <div class="ml-[10px] flex flex-col">
            <button class="flex h-[34px] items-center gap-[5px]"><svg class="size-5"><use href="#fill"/></svg>填充</button>
            <button class="flex h-[33px] items-center gap-[5px]"><svg class="size-5"><use href="#style"/></svg>样式</button>
            <button class="flex h-[34px] items-center gap-[5px]"><svg class="size-5"><use href="#free"/></svg>自由式</button>
          </div>
        </div>
        <button class="flex h-[29px] items-center justify-center gap-[5px]">曲面<svg class="h-[5px] w-[9px] text-[#555]"><use href="#caret"/></svg></button>
      </section>

      <section class="flex w-[86px] flex-col border-r border-[#bbb]">
        <div class="flex h-[104px] justify-center">
          <button class="flex w-[60px] flex-col items-center pt-2"><svg class="size-[38px]"><use href="#puzzle"/></svg><span class="mt-[11px]">元件界面</span></button>
        </div>
        <button class="flex h-[29px] items-center justify-center gap-[5px]">模型意图<svg class="h-[5px] w-[9px] text-[#555]"><use href="#caret"/></svg></button>
      </section>
    </div>

    <div class="flex min-h-0 flex-1">
      <!-- model tree panel -->
      <aside class="flex w-[398px] shrink-0 flex-col border-r border-[#a3a3a3] bg-[#eeeff1]">
        <div class="flex h-9 shrink-0 bg-[#cfcfd1] text-[#777]">
          <button class="flex w-[93px] items-center gap-2 bg-[#eeeff1] pl-3 text-[#3c3c3c]"><svg class="h-6 w-[18px]"><use href="#tree"/></svg>模型树</button>
          <button class="flex w-[140px] items-center gap-[5px] border border-t-0 border-[#a8a8a8] bg-[#dadedf] pl-[9px]"><svg class="size-6"><use href="#folders"/></svg>文件夹浏览器</button>
          <button class="flex w-[94px] items-center gap-2 border border-t-0 border-l-0 border-[#a8a8a8] bg-[#dadedf] pl-[9px]"><svg class="h-5 w-[22px]"><use href="#fav"/></svg>收藏夹</button>
        </div>
        <div class="flex h-9 shrink-0 items-center pr-3 pl-[35px]">
          <h2 class="flex-1 font-normal">模型树</h2>
          <div class="flex items-center text-[#555]">
            <button aria-label="设置" class="flex items-center gap-3"><svg class="h-6 w-5"><use href="#tools"/></svg><svg class="h-[5px] w-[9px]"><use href="#caret"/></svg></button>
            <button aria-label="显示" class="ml-3 flex items-center gap-3"><svg class="h-6 w-5"><use href="#list"/></svg><svg class="h-[5px] w-[9px]"><use href="#caret"/></svg></button>
            <button aria-label="隐藏" class="ml-[14px]"><svg class="h-6 w-[26px]"><use href="#hidetree"/></svg></button>
          </div>
        </div>
        <div class="flex h-[34px] shrink-0 items-center pl-[14px] text-[#555]">
          <svg class="h-[18px] w-5"><use href="#funnel"/></svg>
          <div class="ml-1 flex h-[34px] w-[299px] items-center border border-[#c4c6c8] bg-white pr-[6px]">
            <input type="text" aria-label="过滤" class="h-8 min-w-0 flex-1 px-2 outline-none">
            <button aria-label="清除"><svg class="size-[10px]" viewBox="0 0 10 10"><path d="M0 0l10 10M10 0L0 10" stroke="#aaa" stroke-width="1.800"/></svg></button>
          </div>
          <button aria-label="过滤列表" class="flex w-[22px] justify-center"><svg class="h-[5px] w-[9px]"><use href="#caret"/></svg></button>
          <button aria-label="添加" class="flex w-7 justify-center"><svg class="size-[14px]" viewBox="0 0 14 14"><path d="M5 0h4v5h5v4H9v5H5V9H0V5h5z" fill="#999"/></svg></button>
        </div>
        <ul class="mt-[5px] mr-2 mb-[6px] ml-[10px] flex-1 border-t border-[#ccc] bg-[#fdfdfd] font-normal *:flex *:h-[26px] *:items-center">
          <li><svg class="mr-[5px] ml-1 size-5"><use href="#part"/></svg>练习7.PRT</li>
          <li><svg class="mr-[6px] ml-7 size-5"><use href="#plane-s"/></svg>RIGHT</li>
          <li><svg class="mr-[6px] ml-7 size-5"><use href="#plane-s"/></svg>TOP</li>
          <li><svg class="mr-[6px] ml-7 size-5"><use href="#plane-s"/></svg>FRONT</li>
          <li><svg class="mr-[6px] ml-7 size-5"><use href="#csys"/></svg>PRT_CSYS_DEF</li>
          <li class="text-[#bbb]"><svg class="mr-[6px] ml-7 size-5"><use href="#sk-off"/></svg>草绘 1</li>
          <li><svg class="ml-[10px] h-3 w-[9px]"><use href="#tri"/></svg><svg class="mr-[6px] ml-[9px] size-5"><use href="#blend"/></svg>混合 1</li>
          <li class="text-[#bbb]"><svg class="mr-[6px] ml-7 size-5"><use href="#sk-off"/></svg>草绘 2</li>
          <li><svg class="ml-[10px] h-3 w-[9px]"><use href="#tri"/></svg><svg class="mr-[6px] ml-[9px] size-5"><use href="#blend"/></svg>混合 2</li>
          <li class="text-[#bbb]"><svg class="mr-[6px] ml-7 size-5"><use href="#sk-off"/></svg>草绘 3</li>
          <li><svg class="ml-[10px] h-3 w-[9px]"><use href="#tri"/></svg><svg class="mr-[6px] ml-[9px] size-5"><use href="#patt-s"/></svg>阵列 1 / LOCAL_GROUP</li>
          <li><svg class="ml-[10px] h-3 w-[9px]"><use href="#tri"/></svg><svg class="mr-[6px] ml-[9px] size-5"><use href="#patt-s"/></svg>阵列 2 / 混合 3</li>
          <li class="text-[#bbb]"><svg class="mr-[6px] ml-7 size-5"><use href="#sk-off"/></svg>草绘 12</li>
          <li><svg class="ml-[10px] h-3 w-[9px]"><use href="#tri"/></svg><svg class="mr-[6px] ml-[9px] size-5"><use href="#extrude"/></svg>拉伸 17</li>
          <li><svg class="mr-[6px] ml-7 size-5"><use href="#insert"/></svg>在此插入</li>
        </ul>
      </aside>

      <!-- graphics area -->
      <main class="relative flex-1 bg-[#e8eaee]">
        <svg class="absolute top-[209px] left-[457px] h-[420px] w-[540px]" viewBox="0 0 1568 1260" preserveAspectRatio="none">
          <g shape-rendering="crispEdges">
            <path d="M862 59L1290 230 1027 152z" fill="#707984"/>
            <path d="M1027 150L1290 230 1313 384 1260 370z" fill="#575e69"/>
            <path d="M1027 150L1435 487 997 293z" fill="#7e8994"/>
            <path d="M997 293L1435 487 1480 775z" fill="#7b8792"/>
            <path d="M997 293L1480 775 1217 1055 1170 768z" fill="#717784"/>
            <path d="M782 410L997 293 1170 768z" fill="#97a3b4"/>
            <path d="M782 410L1170 768 1217 1055z" fill="#8a97a5"/>
            <path d="M782 410L1217 1055 697 1197z" fill="#949fb0"/>
            <path d="M782 410L697 1197 651 910z" fill="#575e69"/>
            <path d="M515 427L782 410 651 910z" fill="#deebfd"/>
            <path d="M515 427L651 910 697 1197z" fill="#7b8691"/>
            <path d="M515 427L697 1197 226 1120z" fill="#a4b1c2"/>
            <path d="M515 427L226 1120 181 830z" fill="#77818c"/>
            <path d="M349 337L515 427 181 830z" fill="#adb9cc"/>
            <path d="M349 337L181 830 226 1120 80 863z" fill="#9aa5b5"/>
            <path d="M349 337L80 863 36 575z" fill="#8a96a4"/>
            <path d="M380 190L349 337 36 575z" fill="#9ca9b9"/>
            <path d="M594 75L862 59 1027 150 997 293 782 410 515 427 349 337 380 190z" fill="#9ba8b8"/>
            <path d="M432 200L407 320 457 347z" fill="#58606b"/>
            <path d="M432 200L612 103 654 388 542 395 457 347z" fill="#6a717d"/>
            <path d="M612 103L834 90 868 325 772 380 654 388z" fill="#84919f"/>
            <path d="M834 90L970 164 946 284 868 325z" fill="#8793a1"/>
          </g>
          <g fill="none" stroke-width="3.500"><path d="M734 529L725 472" stroke="#2fe52f"/><path d="M734 529L799 526" stroke="#f03030"/><path d="M734 529L726 566" stroke="#22f0f5"/></g>
          <circle cx="725" cy="472" r="7" fill="#2fe52f"/><circle cx="799" cy="526" r="7" fill="#f03030"/><circle cx="726" cy="566" r="8" fill="#22f0f5"/>
        </svg>

        <!-- floating view toolbar -->
        <div class="absolute top-[7px] left-[512px] flex h-[37px] w-[396px] items-center justify-between border border-[#999] bg-[#f8f8f8] pr-1 pl-[2px]">
          <button aria-label="重新调整" class="flex size-[30px] items-center justify-center"><svg class="size-5"><use href="#z-fit"/></svg></button>
          <button aria-label="放大" class="flex size-[30px] items-center justify-center"><svg class="size-5"><use href="#z-in"/></svg></button>
          <button aria-label="缩小" class="flex size-[30px] items-center justify-center"><svg class="size-5"><use href="#z-out"/></svg></button>
          <button aria-label="重画" class="flex size-[30px] items-center justify-center"><svg class="size-5"><use href="#repaint"/></svg></button>
          <button aria-label="渲染选项" class="relative flex size-[30px] items-center justify-center"><svg class="size-5"><use href="#shade"/></svg><svg class="absolute right-0 bottom-0 size-1" viewBox="0 0 4 4"><path d="M4 0v4H0z" fill="#555"/></svg></button>
          <button aria-label="显示样式" class="relative flex size-[30px] items-center justify-center"><svg class="size-5"><use href="#cube"/></svg><svg class="absolute right-0 bottom-0 size-1" viewBox="0 0 4 4"><path d="M4 0v4H0z" fill="#555"/></svg></button>
          <button aria-label="已保存方向" class="relative flex size-[30px] items-center justify-center"><svg class="size-5"><use href="#views"/></svg><svg class="absolute right-0 bottom-0 size-1" viewBox="0 0 4 4"><path d="M4 0v4H0z" fill="#555"/></svg></button>
          <button aria-label="视图管理器" class="flex size-[30px] items-center justify-center"><svg class="size-5"><use href="#cam"/></svg></button>
          <button aria-label="透视图" class="flex size-[30px] items-center justify-center"><svg class="size-5"><use href="#persp"/></svg></button>
          <button aria-label="基准显示" class="relative flex size-[30px] items-center justify-center"><svg class="size-5"><use href="#datum"/></svg><svg class="absolute right-0 bottom-0 size-1" viewBox="0 0 4 4"><path d="M4 0v4H0z" fill="#555"/></svg></button>
          <button aria-label="注释显示" class="flex size-[30px] items-center justify-center border border-[#aaa] bg-[#e2e3e5]"><svg class="size-5"><use href="#annot"/></svg></button>
          <button aria-label="旋转中心" class="flex size-[30px] items-center justify-center border border-[#aaa] bg-[#e2e3e5]"><svg class="size-5"><use href="#spin"/></svg></button>
        </div>

        <!-- network monitor -->
        <div class="absolute top-[436px] right-[19px] flex h-[75px] w-[149px] items-center">
          <div class="absolute right-0 flex h-[52px] w-[112px] flex-col justify-center rounded-r-full bg-[#2f343f] pr-[11px] text-right text-[15px] leading-[26px] font-medium text-[#eee] shadow-[0_0_6px_#8888]">
            <p>0.2<span class="text-[13px] font-normal text-[#8e929a]">K/s</span></p>
            <p class="border-t border-[#282c36]">3<span class="text-[13px] font-normal text-[#8e929a]">K/s</span></p>
            <svg class="absolute top-2 left-[41px] h-9 w-[9px]" viewBox="0 0 9 36"><path d="M4.500 10V2M1 5.500L4.500 2 8 5.500" fill="none" stroke="#4bb0ee" stroke-width="2"/><path d="M4.500 26v8M1 30.500L4.500 34 8 30.500" fill="none" stroke="#36b24a" stroke-width="2"/></svg>
          </div>
          <div class="relative flex size-[75px] items-center justify-center rounded-full border border-[#3b4250] bg-linear-to-b from-[#4a5160] to-[#5a5f6e] pl-[2px] text-[#eee] shadow-[0_0_6px_#8888]">
            <span class="font-['Open_Sans'] text-[29px] leading-8 font-light">38</span><span class="pt-3 font-['Open_Sans'] text-[13px] font-normal">%</span>
            <svg class="absolute inset-0" viewBox="0 0 74 74"><path d="M37 5.500a32 32 0 0 1 22 54.500" fill="none" stroke="url(#gRing)" stroke-width="2.200"/></svg>
          </div>
        </div>
      </main>
    </div>

    <!-- status bar -->
    <footer class="flex h-9 shrink-0 items-start justify-between overflow-hidden border-t-2 border-[#999] bg-[#eeeff1]">
      <div class="flex h-9 w-full items-start border-t-[3px] border-[#dcdddf]">
        <button aria-label="导航器" class="ml-[7px] mt-[6px] flex h-8 w-[26px] items-start justify-center border border-[#b0b0b0] bg-[#e2e3e5] pt-[2px]"><svg class="h-[21px] w-4"><use href="#tree"/></svg></button>
        <button aria-label="浏览器" class="mt-[9px] ml-[7px]"><svg class="size-5"><use href="#globe"/></svg></button>
        <button aria-label="全屏" class="mt-[9px] ml-[10px] size-5 border-2 border-[#2d7a9b] bg-linear-to-b from-white to-[#d8dde0]"></button>
        <span class="mt-[6px] ml-[13px] h-7 w-px bg-[#b0b0b0]"></span>
        <p class="mt-[5px] ml-[7px] flex items-center gap-[6px] text-[13px]"><span class="size-[6px] rounded-full bg-[#0f5f83]"></span>基准平面将不显示。</p>
        <div class="ml-auto flex">
          <span class="h-9 w-px bg-[#b0b0b0]"></span>
          <div class="ml-12 flex h-9 border-x border-[#b0b0b0] px-[2px] pt-[2px]">
            <button aria-label="查找" class="flex h-9 w-[34px] items-start justify-center border border-[#c4c6c8] bg-[#fafafa] pt-[5px]"><svg class="h-5 w-[22px]"><use href="#binoc"/></svg></button>
            <button aria-label="查找列表" class="flex h-9 w-[17px] items-start justify-center border border-l-0 border-[#c4c6c8] bg-[#fafafa] pt-3 text-[#555]"><svg class="h-[5px] w-[9px]"><use href="#caret"/></svg></button>
          </div>
          <div class="relative mt-[3px] mr-[21px] ml-[119px] h-7 w-[217px] border border-[#b5b5b5] bg-[#fafafa]">
            <select aria-label="选择过滤器" class="h-full w-full appearance-none pl-2"><option>几何</option></select>
            <span class="pointer-events-none absolute top-0 right-0 flex h-full w-5 items-center justify-center border-l border-[#b5b5b5] text-[#666]"><svg class="h-[5px] w-[9px]"><use href="#caret"/></svg></span>
          </div>
        </div>
      </div>
    </footer>
  </div>

  <!-- forum watermark -->
  <div class="pointer-events-none absolute right-[5px] bottom-[5px] h-[62px] w-[206px] bg-white/35">
    <svg class="absolute right-1 -bottom-1 size-3 text-[#aaa]" viewBox="0 0 12 12"><path d="M0 12L12 0M5 12l7-7" stroke="currentColor" stroke-width="1.500"/></svg>
    <svg class="absolute top-[3px] left-[2px] h-[56px] w-[58px] opacity-50" viewBox="0 0 58 56"><path fill-rule="evenodd" d="M10 1C24-2 42 15 41 30c0 9-9 8-17 3C9 26-7 6 10 1zM13 5C0 9 11 23 24 30c7 4 14 4 13-4C36 14 24 2 13 5z" fill="#607f9d"/><path d="M9 46C8 32 27 24 37 31M9 46q1 6 6 5" stroke="#8896a8" stroke-width="1.500" fill="none"/><path d="M41 17c8-3 16 0 16 8 0 14-10 29-20 30-6 0-10-4-10-8 6 6 12 5 18-2 8-9 10-22 4-26q-3-2-8-2z" fill="#dc4f5a"/></svg>
    <p class="absolute top-[5px] left-[71px] text-[29px] leading-8 font-black text-[#8ecfab]">野火论坛</p>
    <p class="absolute top-[37px] left-[57px] text-base leading-6 text-[#bfdfda]">www.proewildfire.cn</p>
  </div>
</body>
</html>
